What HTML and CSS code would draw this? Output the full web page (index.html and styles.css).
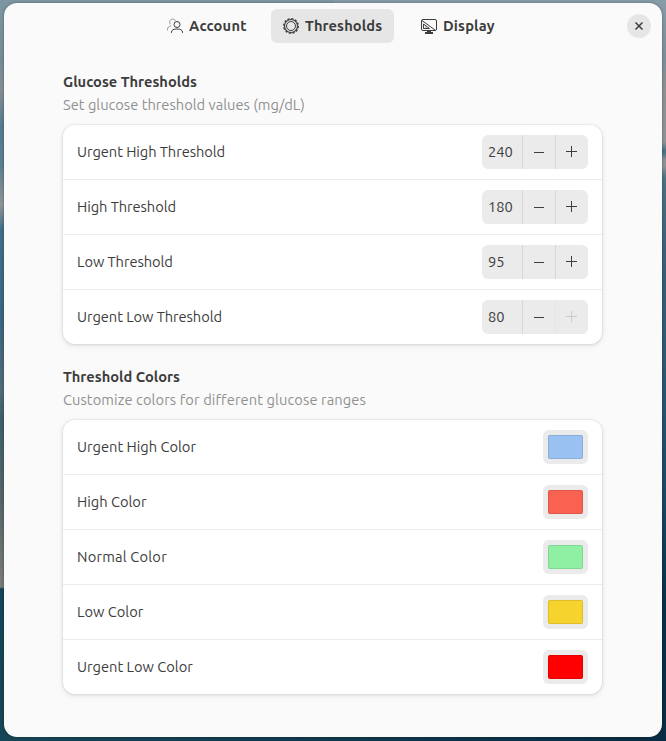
FILE: index.html
```html
<!DOCTYPE html>
<html lang="en">
<head>
<meta charset="utf-8">
<title>Thresholds</title>
<link rel="stylesheet" href="styles.css">
</head>
<body>
<div class="window">
  <header class="bar">
    <nav class="tabs">
      <button class="tab account"><svg class="icon" viewBox="0 0 16 16"><g opacity=".5"><path d="M4 6.500A3 3 0 1 1 8.500 3M.5 12.500v-1C.5 9.300 2 8 4 8"/></g><circle cx="10" cy="6.500" r="3"/><path d="M4.500 15v-.8c0-2.200 2-3.200 5.500-3.200s5.500 1 5.500 3.200v.8"/></svg><span>Account</span></button>
      <button class="tab thresholds active"><svg class="icon" viewBox="0 0 16 16"><circle class="teeth" cx="8" cy="8" r="7.300"/><circle class="ring" cx="8" cy="8" r="6.500"/><circle cx="8" cy="8" r="4.500"/></svg><span>Thresholds</span></button>
      <button class="tab display"><svg class="icon" viewBox="0 0 16 16"><rect x=".5" y="1.500" width="15" height="11" rx="1.500"/><path d="M1 2.500 14 12M2.500 6v4.500h6L2.500 6M4.500 9h1"/><path class="stand" d="M6 13h4v1h2v2H4v-2h2z"/></svg><span>Display</span></button>
    </nav>
    <button class="close" aria-label="Close"><svg viewBox="0 0 8 8"><path d="m.5.5 7 7m0-7-7 7"/></svg></button>
  </header>
  <main>
    <section>
      <h2>Glucose Thresholds</h2>
      <p>Set glucose threshold values (mg/dL)</p>
      <div class="card">
        <div class="row"><span class="label">Urgent High Threshold</span><div class="spin"><b>240</b><button class="minus"></button><button class="plus"></button></div></div>
        <div class="row"><span class="label">High Threshold</span><div class="spin"><b>180</b><button class="minus"></button><button class="plus"></button></div></div>
        <div class="row"><span class="label">Low Threshold</span><div class="spin"><b>95</b><button class="minus"></button><button class="plus"></button></div></div>
        <div class="row"><span class="label">Urgent Low Threshold</span><div class="spin"><b>80</b><button class="minus"></button><button class="plus" disabled></button></div></div>
      </div>
    </section>
    <section>
      <h2>Threshold Colors</h2>
      <p class="wide">Customize colors for different glucose ranges</p>
      <div class="card">
        <div class="row"><span>Urgent High Color</span><button class="color"><i class="blue"></i></button></div>
        <div class="row"><span>High Color</span><button class="color"><i class="coral"></i></button></div>
        <div class="row"><span class="normal">Normal Color</span><button class="color"><i class="green"></i></button></div>
        <div class="row"><span>Low Color</span><button class="color"><i class="yellow"></i></button></div>
        <div class="row"><span>Urgent Low Color</span><button class="color"><i class="red"></i></button></div>
      </div>
    </section>
  </main>
</div>
</body>
</html>
```
FILE: styles.css
```css
* { box-sizing: border-box; }
body {
  margin: 0;
  height: 741px;
  padding: 3px 4px 4px;
  overflow: hidden;
  font: 375 14.667px/20px Ubuntu, "Noto Sans", sans-serif;
  color: #3d3d3d;
  background:
    linear-gradient(90deg, #164657, #0a2c42) bottom / 100% 5px no-repeat,
    linear-gradient(#7e96a2, #758c97 60px, #858e93 90px, #577c8f 125px, #5c7f8f 165px, #8f9596 205px, #3f6f88 230px, #3b6580 320px, #526a78 390px, #3f5f6c 420px, #536568 500px, #7b7c78 587px, #12455a 589px, #164657) left / 50% 100% no-repeat,
    linear-gradient(#869ca6, #7c909a 60px, #8e9092 90px, #8f9496 142px, #487486 150px, #487486 153px, #8d9294 160px, #8d9294 166px, #4c7284 178px, #3c6179 250px, #265672 400px, #184866 500px, #033249 600px, #0a2c42) right / 50% 100% no-repeat;
}
button { margin: 0; padding: 0; border: 0; font: inherit; color: inherit; background: none; }
svg { display: block; fill: none; stroke: #3d3d3d; }
.window { height: 734px; border-radius: 13px; background: #fafafa; box-shadow: 0 0 3px rgba(0,0,0,.35); }
.bar { display: grid; grid-template-columns: 153px 1fr 35px; height: 46px; align-items: center; }
.tabs { grid-column: 2; display: flex; gap: 15px; }
.tab { display: flex; align-items: center; gap: 6px; height: 34px; padding-left: 12px; border-radius: 6px; font-weight: 700; letter-spacing: .1px; white-space: nowrap; }
.tab.account { width: 99px; padding-left: 10px; letter-spacing: .2px; }
.tab.thresholds { width: 123px; }
.tab.display { width: 100px; letter-spacing: .15px; }
.active { background: #e6e6e6; }
.icon { width: 16px; height: 16px; flex: none; stroke-width: 1; }
.teeth { stroke-width: 1.4; stroke-dasharray: 2.2 1.622; }
.ring { stroke-width: 1.1; }
.stand { fill: #3d3d3d; stroke: none; }
.close { grid-column: 3; display: grid; place-items: center; width: 24px; height: 24px; border-radius: 50%; background: #e6e6e6; }
.close svg { width: 8px; height: 8px; stroke-width: 1.5; }
main { padding: 22px 60px 0 59px; }
section { margin-bottom: 22px; }
h2 { margin: 0; font-size: inherit; line-height: 22px; font-weight: 700; }
p { margin: 0 0 8px; line-height: 24px; color: #919191; }
.wide { letter-spacing: .09px; }
.label { letter-spacing: -.06px; }
.normal { letter-spacing: .2px; }
.card { border-radius: 12px; background: #fff; box-shadow: 0 0 0 1px rgba(0,0,0,.03), 0 1px 3px 1px rgba(0,0,0,.07), 0 2px 6px 2px rgba(0,0,0,.03); }
.row { display: flex; align-items: center; justify-content: space-between; height: 54px; padding: 0 14px; }
.row + .row { height: 55px; border-top: 1px solid #ebebeb; }
.spin { display: grid; grid-template-columns: 40px 33px 33px; width: 106px; height: 34px; border-radius: 6px; background: #ebebeb; }
.spin b { padding-left: 6px; line-height: 34px; font-weight: inherit; }
.spin button { border-left: 1px solid #d7d7d7; background: linear-gradient(#3d3d3d, #3d3d3d) 11px 17px / 10px 1px no-repeat; }
.spin .plus { background: linear-gradient(#3d3d3d, #3d3d3d) 10px 16px / 11px 1px no-repeat, linear-gradient(#3d3d3d, #3d3d3d) 15px 11px / 1px 11px no-repeat; }
.spin .plus:disabled { border-color: #e5e5e5; background-image: linear-gradient(#cbcbcb, #cbcbcb), linear-gradient(#cbcbcb, #cbcbcb); }
.color { display: grid; place-items: center; width: 45px; height: 34px; border-radius: 6px; background: #ebebeb; }
.color i { width: 35px; height: 24px; border-radius: 2px; box-shadow: inset 0 0 0 1px rgba(0,0,0,.1); }
.blue { background: #99c1f1; }
.coral { background: #f96150; }
.green { background: #8ff0a4; }
.yellow { background: #f6d32d; }
.red { background: #f00; }
```
